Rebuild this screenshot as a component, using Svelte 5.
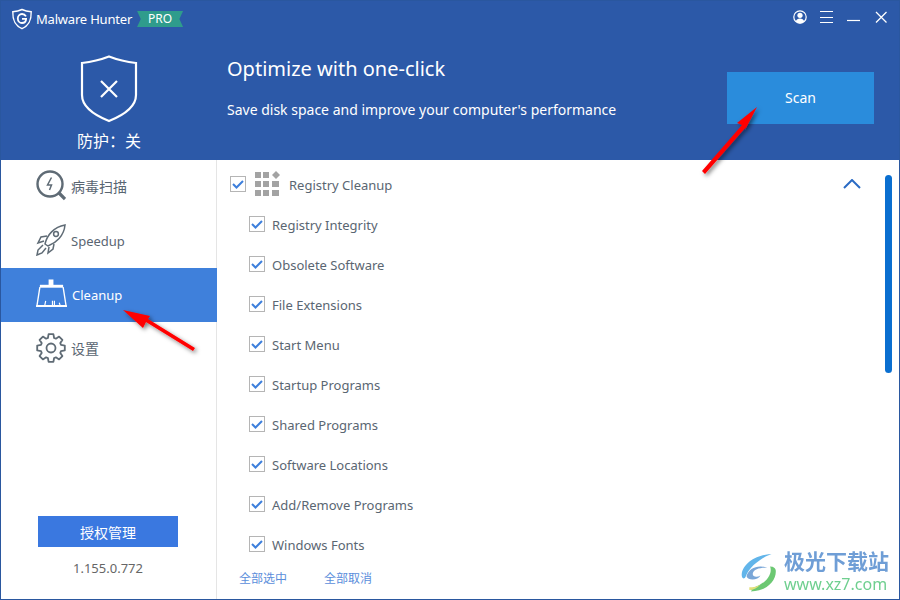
<script>
	const items = [
		'Registry Integrity',
		'Obsolete Software',
		'File Extensions',
		'Start Menu',
		'Startup Programs',
		'Shared Programs',
		'Software Locations',
		'Add/Remove Programs',
		'Windows Fonts'
	];

	// 8 rounded teeth around the centre of a 30x30 box
	function gearPath() {
		let d = '';
		for (let i = 0; i < 8; i++) {
			const a = (i * Math.PI) / 4;
			const pts = [
				[-0.3, 10.5],
				[-0.17, 14],
				[0.17, 14],
				[0.3, 10.5]
			].map(([off, r]) => {
				const x = 15 + r * Math.sin(a + off);
				const y = 15 - r * Math.cos(a + off);
				return `${x.toFixed(1)} ${y.toFixed(1)}`;
			});
			d += `${i === 0 ? 'M' : 'L'}${pts.join('L')}`;
		}
		return d + 'Z';
	}
</script>

{#snippet check()}
	<span class="check">
		<svg width="14" height="14" viewBox="0 0 14 14"><path d="M2 7l3.500 3.500L12 4" fill="none" stroke="#3d7fdc" stroke-width="2" /></svg>
	</span>
{/snippet}

<div class="window">
	<header class="header">
		<div class="brand">
			<svg class="logo" width="22" height="22" viewBox="0 0 22 22" fill="none" stroke="#fff">
				<path d="M11 1.500C8 3 5 3.600 1.800 3.700 1.600 11 3 17 11 20.700 19 17 20.400 11 20.200 3.700 17 3.600 14 3 11 1.500z" stroke-width="1.400" />
				<path d="M15 8.400C14 6.600 12.600 6 11 6 8.600 6 6.800 8 6.800 10.400S8.600 15 11 15c2.400 0 4-1.600 4.100-4.100H11" stroke-width="1.800" />
			</svg>
			<span class="brand-name">Malware Hunter</span>
			<span class="pro">PRO</span>
		</div>
		<div class="win-controls">
			<svg width="14" height="14" viewBox="0 0 14 14">
				<circle cx="7" cy="7" r="6.200" fill="none" stroke="#fff" stroke-width="1.200" />
				<circle cx="7" cy="5.300" r="2.600" fill="#fff" />
				<path d="M2.600 11.600C3.400 9.300 5 8.500 7 8.500s3.600.8 4.400 3.100C10 13 8.500 13.400 7 13.400S4 13 2.600 11.600z" fill="#fff" />
			</svg>
			<svg width="14" height="14" viewBox="0 0 14 14" stroke="#fff"><path d="M0 1.500h13M0 7.500h13M0 12.500h13" /></svg>
			<svg width="14" height="14" viewBox="0 0 14 14" stroke="#fff"><path d="M0 10.500h13" stroke-width="1.200" /></svg>
			<svg width="14" height="14" viewBox="0 0 14 14" stroke="#fff"><path d="M2 2l10.500 10.500M12.500 2L2 12.500" stroke-width="1.300" /></svg>
		</div>
		<div class="hero">
			<div class="status">
				<svg width="58" height="68" viewBox="0 0 58 68" fill="none" stroke="#fff">
					<path d="M29 1.500C20 5 11 7 2 8V40C2 52 14 60 29 66 44 60 56 52 56 40V8C47 7 38 5 29 1.500z" stroke-width="2.200" />
					<path d="M21 26l16 16M37 26L21 42" stroke-width="2.200" />
				</svg>
				<span class="status-text">防护：关</span>
			</div>
			<div class="headline">
				<h1>Optimize with one-click</h1>
				<p>Save disk space and improve your computer's performance</p>
			</div>
			<button class="scan">Scan</button>
		</div>
	</header>

	<div class="body">
		<aside class="sidebar">
			<nav>
				<div class="nav-item">
					<svg width="30" height="32" viewBox="0 0 30 32" fill="none" stroke="#5f6b75">
						<circle cx="14" cy="14" r="12.500" stroke-width="2.400" />
						<path d="M15.500 7.500l-4 7.500h4l-2 5" stroke-width="1.500" />
						<path d="M23 23l6 6" stroke-width="3.200" />
					</svg>
					<span class="zh">病毒扫描</span>
				</div>
				<div class="nav-item">
					<svg width="30" height="32" viewBox="0 0 30 32" fill="none" stroke="#5f6b75" stroke-width="1.500">
						<path d="M9 20C11 11 18 3 29 1 28 12 20 19 12 22z" />
						<circle cx="20" cy="10" r="2.400" />
						<path d="M11 12l-6 1-3 6 6-2M18 20l-1 5-5 4 1-6M7 21l-5 5-1 5 5-2 4-5" />
					</svg>
					<span>Speedup</span>
				</div>
				<div class="nav-item active">
					<svg width="31" height="30" viewBox="0 0 32 30" fill="none" stroke="#fff">
						<path d="M13 0h5v6h-5z" fill="#fff" stroke="none" />
						<path d="M4 7h24" stroke-width="3" />
						<path d="M4 8L1 27h30L28 8" stroke-width="1.400" />
						<path d="M0 27.500h32" stroke-width="1.800" />
						<path d="M9 27l1-5M17 27v-5M19 27v-5M25 27l-1-3" stroke-width="1.200" />
					</svg>
					<span>Cleanup</span>
				</div>
				<div class="nav-item">
					<svg width="30" height="30" viewBox="0 0 30 30" fill="none" stroke="#5f6b75" stroke-width="1.800">
						<path d={gearPath()} stroke-linejoin="round" />
						<circle cx="15" cy="15" r="4.500" />
					</svg>
					<span class="zh">设置</span>
				</div>
			</nav>
			<div class="license">
				<button class="license-btn">授权管理</button>
				<span class="version">1.155.0.772</span>
			</div>
		</aside>

		<main class="content">
			<div class="group-head">
				{@render check()}
				<svg class="grid-icon" width="26" height="26" viewBox="0 0 26 26" fill="#a3a3a3">
					<path d="M0 1h6v6H0zM8 1h6v6H8zM21 0l4 4-4 4-4-4z" />
					<path d="M0 10h6v6H0zM8 10h6v6H8zM17 10h7v6h-7zM0 19h6v6H0zM8 19h6v6H8zM17 19h7v6h-7z" />
				</svg>
				<span class="group-title">Registry Cleanup</span>
				<svg class="chevron" width="18" height="10" viewBox="0 0 18 10" fill="none" stroke="#2a6bc4" stroke-width="2"><path d="M1 9l8-8 8 8" /></svg>
			</div>
			<ul>
				{#each items as item}
					<li>
						{@render check()}
						<span class="item-label">{item}</span>
					</li>
				{/each}
			</ul>
			<div class="select-links">
				<span>全部选中</span>
				<span>全部取消</span>
			</div>
			<div class="scrollbar"></div>
		</main>
	</div>

	<svg class="arrows" width="900" height="600" viewBox="0 0 900 600">
		<defs>
			<filter id="shadow" x="-30%" y="-30%" width="160%" height="160%">
				<feDropShadow dx="2" dy="2" stdDeviation="2" flood-color="#000" flood-opacity="0.5" />
			</filter>
		</defs>
		<g fill="#f00" filter="url(#shadow)">
			<path d="M757 107L737 123 742 125 702 171 705 174 746 127 745 130z" />
			<path d="M123 310L143 328 146 322 193 351 195 348 148 319 150 316z" />
		</g>
	</svg>

	<div class="watermark">
		<svg width="43" height="40" viewBox="0 0 62 56">
			<path d="M44 2C22 3 2 16 1 32c0 6 4 7 6 2C12 20 28 8 44 2z" fill="#62b5ea" />
			<path d="M8 34c3-11 16-17 30-12-10-1-20 2-21 8-1 5 6 6 11 3-3 7-18 8-20 1z" fill="#7aa7d8" />
			<path d="M42 20c4 11-6 26-29 32 3 2 3 3 1 4 24 0 38-17 36-31-1-4-5-5-8-5z" fill="#6cc873" />
			<path d="M12 50c6 0 12-1 16-4-4 5-10 8-16 8z" fill="#e3e07a" />
		</svg>
		<div class="wm-text">
			<span class="wm-title">极光下载站</span>
			<span class="wm-url">www.xz7.com</span>
		</div>
	</div>
</div>

<style>
	:global(body) {
		margin: 0;
	}

	.window {
		position: relative;
		width: 900px;
		height: 600px;
		box-sizing: border-box;
		border: 1px solid #2a579f;
		overflow: hidden;
		font-family: 'Noto Sans', 'Noto Sans CJK SC', sans-serif;
		font-size: 13px;
		color: #5a6672;
		background: #fff;
	}

	.zh {
		font-size: 14px;
	}

	.header {
		height: 159px;
		background: #2c59a8;
		color: #fff;
		position: relative;
	}

	.brand {
		display: flex;
		align-items: center;
		padding: 7px 0 0 10px;
	}

	.brand-name {
		margin-left: 3px;
		font-size: 13px;
		letter-spacing: -0.2px;
	}

	.pro {
		margin-left: 5px;
		width: 46px;
		height: 16px;
		line-height: 16px;
		text-align: center;
		font-size: 12px;
		background: #2f9c8c;
		clip-path: polygon(0 0, 100% 0, 92% 50%, 100% 100%, 0 100%, 8% 50%);
	}

	.win-controls {
		position: absolute;
		top: 9px;
		right: 11px;
		display: flex;
		gap: 13px;
	}

	.hero {
		display: flex;
		margin-top: 17px;
	}

	.status {
		width: 216px;
		display: flex;
		flex-direction: column;
		align-items: center;
		gap: 6px;
		margin-top: 8px;
	}

	.status-text {
		font-size: 16px;
		line-height: 24px;
	}

	.headline {
		margin-left: 10px;
		width: 500px;
	}

	h1 {
		margin: 7px 0 0;
		font-size: 20px;
		font-weight: 400;
		line-height: 30px;
	}

	p {
		margin: 16px 0 0;
		font-size: 14px;
		line-height: 20px;
	}

	.scan {
		width: 147px;
		height: 52px;
		margin-top: 25px;
		padding: 0 0 2px;
		border: 0;
		background: #2a8cdc;
		color: #fff;
		font: inherit;
		font-size: 14px;
	}

	.body {
		display: flex;
		height: 439px;
	}

	.sidebar {
		width: 215px;
		border-right: 1px solid #e5e5e5;
		display: flex;
		flex-direction: column;
		justify-content: space-between;
		flex: none;
	}

	.nav-item {
		height: 54px;
		display: flex;
		align-items: center;
		gap: 5px;
		padding: 0 0 2px 35px;
		box-sizing: border-box;
		margin-right: -1px;
		font-size: 14px;
	}

	.nav-item span:not(.zh) {
		font-size: 13px;
		padding-top: 2px;
	}

	.nav-item svg {
		flex: none;
	}

	.nav-item.active {
		background: #3f80db;
		color: #fff;
	}

	.license {
		display: flex;
		flex-direction: column;
		align-items: center;
		padding: 0 1px 22px 0;
	}

	.license-btn {
		width: 140px;
		height: 31px;
		border: 0;
		background: #3a78e0;
		color: #fff;
		font: inherit;
		font-size: 14px;
	}

	.version {
		margin-top: 12px;
		font-size: 13px;
		line-height: 18px;
		color: #666;
	}

	.content {
		position: relative;
		flex: 1;
		padding: 14px 0 0 13px;
	}

	.group-head {
		display: flex;
		align-items: center;
		height: 20px;
	}

	.grid-icon {
		margin-left: 9px;
	}

	.group-title {
		margin-left: 8px;
		padding-top: 2px;
	}

	.chevron {
		margin-left: auto;
		margin-right: 38px;
	}

	.check {
		width: 14px;
		height: 14px;
		border: 1px solid #b5b5b5;
		display: flex;
		align-items: center;
		justify-content: center;
		flex: none;
	}

	ul {
		list-style: none;
		margin: 0;
		padding: 0 0 0 19px;
	}

	li {
		height: 40px;
		display: flex;
		align-items: center;
		gap: 7px;
	}

	li:first-child {
		margin-top: 10px;
	}

	.item-label {
		padding-top: 2px;
	}

	.select-links {
		display: flex;
		gap: 37px;
		padding: 5px 0 0 9px;
		font-size: 12px;
		color: #5b8edb;
	}

	.scrollbar {
		position: absolute;
		top: 15px;
		right: 7px;
		width: 7px;
		height: 198px;
		border-radius: 4px;
		background: #0a6fd0;
	}

	.arrows {
		position: absolute;
		top: -1px;
		left: -1px;
		pointer-events: none;
	}

	.watermark {
		position: absolute;
		left: 740px;
		bottom: 5px;
		display: flex;
		align-items: center;
		filter: blur(0.4px);
	}

	.wm-text {
		display: flex;
		flex-direction: column;
		white-space: nowrap;
	}

	.wm-title {
		font-size: 21px;
		line-height: 25px;
		font-weight: 700;
		color: #6f9ed6;
	}

	.wm-url {
		font-size: 16px;
		line-height: 20px;
		color: #6fcf8f;
	}
</style>
